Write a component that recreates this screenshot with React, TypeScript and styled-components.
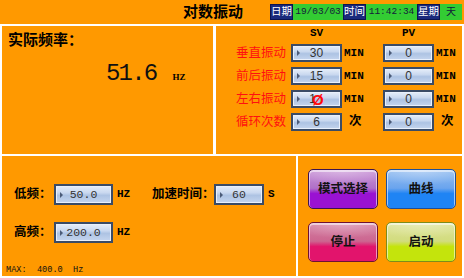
import React from "react";
import styled, { createGlobalStyle } from "styled-components";

const Global = createGlobalStyle`
  html, body { margin: 0; padding: 0; background: #ffffff; }
  body { font-family: "Liberation Serif", "Noto Sans CJK SC", serif; }
`;

const ORANGE = "#ff9900";
const CJK = `"Liberation Serif", "Noto Sans CJK SC", sans-serif`;
const MONO = `"Liberation Mono", "Noto Sans CJK SC", monospace`;

const Screen = styled.div`
  width: 464px;
  height: 278px;
  background: #ffffff;
  display: flex;
  flex-direction: column;
  overflow: hidden;
`;

const TopBar = styled.div`
  height: 24px;
  background: ${ORANGE};
  display: flex;
  align-items: center;
  flex-shrink: 0;
`;

const Title = styled.div`
  margin-left: 183px;
  font: 700 15px/15px ${CJK};
  color: #000;
`;

const DateGroup = styled.div`
  margin-left: auto;
  margin-right: 2px;
  display: flex;
  height: 16px;
`;

const DateLabel = styled.div`
  width: 23px;
  box-sizing: border-box;
  background: #1b2a7c;
  border: 1px solid #0c1450;
  color: #ffffff;
  font: 400 10.5px/14px ${CJK};
  display: flex;
  align-items: center;
  justify-content: center;
`;

const DateValue = styled.div<{ $w: number; $cjk?: boolean }>`
  width: ${(p) => p.$w}px;
  background: #33cc33;
  color: #14203a;
  font: ${(p) => (p.$cjk ? `400 10px/16px ${CJK}` : `400 9.5px/16px ${MONO}`)};
  display: flex;
  align-items: center;
  justify-content: center;
`;

const Content = styled.div`
  flex: 1;
  padding: 2px;
  display: flex;
  flex-direction: column;
  gap: 2px;
`;

const Row = styled.div<{ $h: number; $gap: number }>`
  height: ${(p) => p.$h}px;
  display: flex;
  gap: ${(p) => p.$gap}px;
`;

const Panel = styled.div<{ $w?: number }>`
  background: ${ORANGE};
  box-sizing: border-box;
  ${(p) => (p.$w ? `width: ${p.$w}px; flex-shrink: 0;` : "flex: 1;")}
`;

const FreqPanel = styled(Panel)`
  padding: 7px 0 0 6px;
`;

const PanelTitle = styled.div`
  font: 700 15px/15px ${CJK};
  color: #000;
`;

const FreqLine = styled.div`
  margin-top: 14px;
  padding-left: 98px;
  display: flex;
  align-items: baseline;
`;

const BigValue = styled.span`
  font: 400 24px/24px ${MONO};
  letter-spacing: -1.8px;
  color: #111;
`;

const SmallUnit = styled.span`
  margin-left: 16px;
  font: 700 9px/9px ${CJK};
  color: #000;
`;

const SetPanel = styled(Panel)`
  padding: 1px 0 0 20px;
  display: grid;
  grid-template-columns: 55px 51px 41px 51px auto;
  grid-template-rows: 12px repeat(4, 18px);
  row-gap: 5px;
  align-content: start;
  align-items: center;
`;

const Cell = styled.div``;

const ColHead = styled.div`
  text-align: center;
  font: 700 11px/12px ${MONO};
  color: #000;
`;

const RedLabel = styled.div`
  font: 400 12.5px/18px ${CJK};
  color: #ff1010;
  white-space: nowrap;
`;

const Unit = styled.div<{ $indent?: number; $size?: number }>`
  padding-left: ${(p) => p.$indent ?? 2}px;
  font: 700 ${(p) => p.$size ?? 11}px/18px ${MONO};
  color: #000;
  white-space: nowrap;
`;

const ValueBox = styled.div<{ $w: number; $h: number; $mono?: boolean }>`
  position: relative;
  width: ${(p) => p.$w}px;
  height: ${(p) => p.$h}px;
  box-sizing: border-box;
  border: 2px solid #3a4b66;
  box-shadow: inset 0 0 0 1px #e9f0fb;
  background: linear-gradient(
    to bottom,
    #e6eef9 0%,
    #c9d8ef 40%,
    #adc3e3 55%,
    #c5d5ee 100%
  );
  display: flex;
  align-items: center;
  justify-content: center;
  color: #333;
  font: ${(p) =>
    p.$mono ? `400 11.5px/1 ${MONO}` : `400 12px/1 "Liberation Sans", sans-serif`};
  &::before {
    content: "";
    position: absolute;
    left: 4px;
    top: 50%;
    margin-top: -3px;
    border-left: 3px solid #4b5b78;
    border-top: 3px solid transparent;
    border-bottom: 3px solid transparent;
  }
`;

const Forbidden = styled.span`
  margin-left: -4px;
  color: #ff0a0a;
  font: 700 15px/1 "Liberation Sans", sans-serif;
`;

const LowerPanel = styled(Panel)`
  padding: 28px 0 1px 0;
  display: flex;
  flex-direction: column;
`;

const Form = styled.div`
  padding-left: 12px;
  display: flex;
  flex-direction: column;
  gap: 17px;
`;

const FormRow = styled.div`
  height: 21px;
  display: flex;
  align-items: center;
`;

const FormLabel = styled.div<{ $w: number }>`
  width: ${(p) => p.$w}px;
  flex-shrink: 0;
  font: 700 12.5px/21px ${CJK};
  color: #000;
  white-space: nowrap;
`;

const FormUnit = styled.div<{ $w: number }>`
  width: ${(p) => p.$w}px;
  padding-left: 4px;
  box-sizing: border-box;
  font: 700 11px/21px ${MONO};
  color: #000;
`;

const Footer = styled.div`
  margin-top: auto;
  padding-left: 4px;
  font: 400 8.6px/9px ${MONO};
  color: #111;
  white-space: pre;
`;

const ButtonPanel = styled(Panel)`
  padding: 13px 0 0 10px;
  display: grid;
  grid-template-columns: 70px 70px;
  grid-template-rows: 40px 40px;
  column-gap: 8px;
  row-gap: 13px;
  align-content: start;
`;

type Tone = { top: string; mid: string; low: string; border: string };

const TONES: Record<string, Tone> = {
  purple: { top: "#c993d6", mid: "#b070c8", low: "#9a12d2", border: "#3b1450" },
  blue: { top: "#93bdf0", mid: "#6aa4ee", low: "#1f84f4", border: "#1e4f9a" },
  pink: { top: "#d47fa2", mid: "#cc6690", low: "#e2146c", border: "#6e1232" },
  lime: { top: "#dde396", mid: "#d2dc7e", low: "#c4e40c", border: "#7d8c1a" },
};

const GlossButton = styled.button<{ $tone: Tone }>`
  box-sizing: border-box;
  width: 70px;
  height: 40px;
  border-radius: 5px;
  border: 1.5px solid ${(p) => p.$tone.border};
  padding: 0;
  background:
    radial-gradient(ellipse 80% 40% at 50% 0%, rgba(255,255,255,0.35), rgba(255,255,255,0) 100%),
    linear-gradient(
      to bottom,
      ${(p) => p.$tone.top} 0%,
      ${(p) => p.$tone.mid} 48%,
      ${(p) => p.$tone.low} 62%,
      ${(p) => p.$tone.low} 100%
    );
  box-shadow: inset 0 1px 0 1px rgba(255, 255, 255, 0.55);
  font: 700 12.5px/1 ${CJK};
  color: #111;
  display: flex;
  align-items: center;
  justify-content: center;
  cursor: pointer;
`;

const rows = [
  { label: "垂直振动", sv: "30", pv: "0", unit: "MIN" },
  { label: "前后振动", sv: "15", pv: "0", unit: "MIN" },
  { label: "左右振动", sv: "10", pv: "0", unit: "MIN", bad: true },
  { label: "循环次数", sv: "6", pv: "0", unit: "次" },
];

export default function App() {
  return (
    <>
      <Global />
      <Screen>
        <TopBar>
          <Title>对数振动</Title>
          <DateGroup>
            <DateLabel>日期</DateLabel>
            <DateValue $w={50}>19/03/03</DateValue>
            <DateLabel>时间</DateLabel>
            <DateValue $w={51}>11:42:34</DateValue>
            <DateLabel>星期</DateLabel>
            <DateValue $w={22} $cjk>
              天
            </DateValue>
          </DateGroup>
        </TopBar>
        <Content>
          <Row $h={128} $gap={3}>
            <FreqPanel $w={211}>
              <PanelTitle>实际频率：</PanelTitle>
              <FreqLine>
                <BigValue>51.6</BigValue>
                <SmallUnit>HZ</SmallUnit>
              </FreqLine>
            </FreqPanel>
            <SetPanel>
              <Cell />
              <ColHead>SV</ColHead>
              <Cell />
              <ColHead>PV</ColHead>
              <Cell />
              {rows.map((r) => {
                const isCount = r.unit === "次";
                return (
                  <React.Fragment key={r.label}>
                    <RedLabel>{r.label}</RedLabel>
                    <ValueBox $w={51} $h={18}>
                      {r.bad ? (
                        <>
                          1<Forbidden>Ø</Forbidden>
                        </>
                      ) : (
                        r.sv
                      )}
                    </ValueBox>
                    <Unit $indent={isCount ? 7 : 2} $size={isCount ? 12.5 : 11}>
                      {r.unit}
                    </Unit>
                    <ValueBox $w={51} $h={18}>
                      {r.pv}
                    </ValueBox>
                    <Unit $indent={isCount ? 7 : 2} $size={isCount ? 12.5 : 11}>
                      {r.unit}
                    </Unit>
                  </React.Fragment>
                );
              })}
            </SetPanel>
          </Row>
          <Row $h={120} $gap={2}>
            <LowerPanel $w={294}>
              <Form>
                <FormRow>
                  <FormLabel $w={40}>低频：</FormLabel>
                  <ValueBox $w={59} $h={21} $mono>
                    50.0
                  </ValueBox>
                  <FormUnit $w={39}>HZ</FormUnit>
                  <FormLabel $w={62}>加速时间：</FormLabel>
                  <ValueBox $w={50} $h={21} $mono>
                    60
                  </ValueBox>
                  <FormUnit $w={20}>S</FormUnit>
                </FormRow>
                <FormRow>
                  <FormLabel $w={40}>高频：</FormLabel>
                  <ValueBox $w={59} $h={21} $mono>
                    200.0
                  </ValueBox>
                  <FormUnit $w={39}>HZ</FormUnit>
                </FormRow>
              </Form>
              <Footer>{"MAX:  400.0  Hz"}</Footer>
            </LowerPanel>
            <ButtonPanel>
              <GlossButton $tone={TONES.purple}>模式选择</GlossButton>
              <GlossButton $tone={TONES.blue}>曲线</GlossButton>
              <GlossButton $tone={TONES.pink}>停止</GlossButton>
              <GlossButton $tone={TONES.lime}>启动</GlossButton>
            </ButtonPanel>
          </Row>
        </Content>
      </Screen>
    </>
  );
}
